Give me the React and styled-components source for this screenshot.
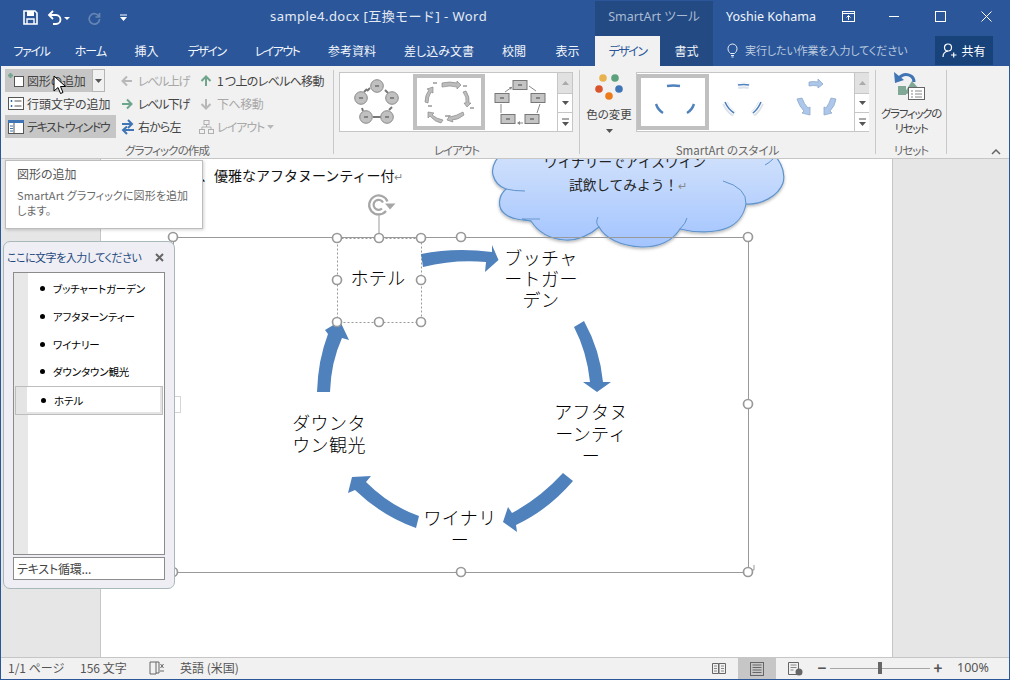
import React from "react";
import styled, { createGlobalStyle } from "styled-components";

const Global = createGlobalStyle`
  html, body { margin: 0; padding: 0; background: #fff; }
  * { box-sizing: border-box; }
`;

const UI = `"Noto Sans", "Noto Sans CJK JP", sans-serif`;
const JP = `"Noto Sans CJK JP", sans-serif`;

const Window = styled.div`
  position: relative;
  width: 1010px;
  height: 680px;
  overflow: hidden;
  display: flex;
  flex-direction: column;
  font-family: ${UI};
  font-feature-settings: "palt";
  font-size: 12px;
  color: #444;
  &::after {
    content: "";
    position: absolute;
    inset: 0;
    border: 1px solid #2b579a;
    pointer-events: none;
    z-index: 9;
  }
`;

/* ---------- title bar ---------- */
const TitleBar = styled.div`
  height: 36px;
  flex: none;
  display: flex;
  align-items: stretch;
  background: #2b579a;
  color: #fff;
`;
const Qat = styled.div`
  width: 595px;
  flex: none;
  display: grid;
  grid-template-columns: 18px 22px 30px 28px 30px 1fr;
  align-items: center;
  height: 34px;
`;
const QatIcon = styled.svg`
  display: block;
  justify-self: center;
  grid-column: ${(p) => p.$col};
  margin-left: ${(p) => p.$ml}px;
`;
const TitleText = styled.div`
  text-align: left;
  margin: -3px 0 0 142px;
  font-size: 13px;
  letter-spacing: 0.45px;
  font-feature-settings: normal;
  color: #e6ebf3;
  white-space: nowrap;
`;
const ContextTitle = styled.div`
  width: 118px;
  flex: none;
  margin-top: 1px;
  background: #234a82;
  color: #a9bad4;
  font-size: 12.5px;
  display: flex;
  align-items: center;
  justify-content: center;
  padding-bottom: 6px;
`;
const UserName = styled.div`
  width: 119px;
  flex: none;
  padding: 0 0 3px 13px;
  display: flex;
  align-items: center;
  font-size: 12.5px;
  color: #f2f5f9;
  white-space: nowrap;
`;
const WinButtons = styled.div`
  flex: 1;
  display: flex;
  align-items: center;
  padding-bottom: 3px;
`;
const WinButton = styled.span`
  width: ${(p) => p.$w}px;
  flex: none;
  display: flex;
  justify-content: center;
`;

/* ---------- tabs ---------- */
const TabRow = styled.div`
  height: 30px;
  flex: none;
  display: flex;
  align-items: stretch;
  background: #2b579a;
  padding-left: 2px;
`;
const Tab = styled.div`
  width: ${(p) => p.$w}px;
  flex: none;
  display: flex;
  align-items: center;
  justify-content: center;
  padding-bottom: 2px;
  font-size: 12px;
  white-space: nowrap;
  font-family: ${JP};
  letter-spacing: ${(p) => p.$ls || 0}px;
  color: ${(p) => (p.$active ? "#2b579a" : "#f3f6fa")};
  background: ${(p) => (p.$active ? "#f1f1f1" : p.$context ? "#234a82" : "transparent")};
`;
const TellMe = styled.div`
  width: 222px;
  flex: none;
  display: flex;
  align-items: center;
  gap: 7px;
  padding: 0 0 2px 14px;
  font-family: ${JP};
  font-size: 11px;
  letter-spacing: -0.1px;
  color: #bccadf;
  white-space: nowrap;
`;
const Share = styled.div`
  width: 58px;
  height: 29px;
  flex: none;
  display: flex;
  align-items: center;
  justify-content: center;
  gap: 4px;
  background: #17427a;
  color: #fff;
  font-family: ${JP};
  font-size: 12px;
`;

/* ---------- ribbon ---------- */
const Ribbon = styled.div`
  height: 93px;
  flex: none;
  display: flex;
  background: #f1f1f1;
  border-bottom: 1px solid #c6c6c6;
  padding-left: 1px;
  position: relative;
  font-family: ${JP};
`;
const Group = styled.div`
  width: ${(p) => p.$w}px;
  flex: none;
  height: 92px;
  display: flex;
  flex-direction: column;
  position: relative;
  &::after {
    content: "";
    position: absolute;
    right: 0;
    top: 4px;
    bottom: 4px;
    width: 1px;
    background: #c9c9c9;
  }
`;
const GroupBody = styled.div`
  height: 77px;
  flex: none;
  display: flex;
  align-items: flex-start;
  padding: ${(p) => p.$pad || "3px 0 0 4px"};
`;
const GroupLabel = styled.div`
  flex: 1;
  text-align: center;
  font-size: 11.5px;
  color: #666;
  line-height: 15px;
  letter-spacing: ${(p) => p.$ls || 0}px;
  white-space: nowrap;
  padding-right: 1px;
`;
const CmdCol = styled.div`
  width: ${(p) => p.$w}px;
  flex: none;
  display: flex;
  flex-direction: column;
`;
const Cmd = styled.div`
  height: 23px;
  display: flex;
  align-items: center;
  gap: 3px;
  font-size: 12px;
  white-space: nowrap;
  letter-spacing: ${(p) => p.$ls || 0}px;
  color: ${(p) => (p.$off ? "#a8a8a8" : "#444")};
  background: ${(p) => (p.$on ? "#c6c6c6" : "transparent")};
`;
const WideCmd = styled(Cmd)`
  width: 111px;
`;
const SplitCmd = styled.div`
  height: 23px;
  display: flex;
  align-items: stretch;
`;
const SplitMain = styled(Cmd)`
  width: 87px;
  background: #c6c6c6;
`;
const SplitDrop = styled.div`
  width: 13px;
  border: 1px solid #b5b5b5;
  display: flex;
  align-items: center;
  justify-content: center;
`;
const Gallery = styled.div`
  width: ${(p) => p.$w}px;
  height: 60px;
  flex: none;
  margin-top: 3px;
  display: flex;
  background: #fff;
  border: 1px solid #c6c6c6;
`;
const Thumb = styled.div`
  width: ${(p) => p.$w}px;
  flex: none;
  border: ${(p) => (p.$on ? "4px solid #c0c0c0" : "0")};
  margin: ${(p) => (p.$on ? "1px 0" : "0")};
  overflow: hidden;
`;
const ThumbArt = styled.svg`
  display: block;
  width: 100%;
  height: 100%;
`;
const ScrollCol = styled.div`
  margin-left: auto;
  width: 15px;
  flex: none;
  display: flex;
  flex-direction: column;
  border-left: 1px solid #c6c6c6;
`;
const ScrollBtn = styled.div`
  height: ${(p) => p.$h}px;
  display: flex;
  align-items: center;
  justify-content: center;
  background: ${(p) => (p.$off ? "#e1e1e1" : "#fff")};
  border-bottom: ${(p) => (p.$last ? "0" : "1px solid #c6c6c6")};
`;
const BigButton = styled.div`
  width: ${(p) => p.$w}px;
  flex: none;
  display: flex;
  flex-direction: column;
  align-items: center;
  font-size: 11.5px;
  line-height: 15px;
  text-align: center;
  color: #444;
  white-space: nowrap;
  letter-spacing: ${(p) => p.$ls || 0}px;
`;
const BigIconSlot = styled.span`
  display: block;
  height: ${(p) => p.$h}px;
  margin-top: ${(p) => p.$mt || 0}px;
`;
const BigLine = styled.span`
  display: block;
  margin-top: ${(p) => p.$mt || 0}px;
`;
const BigCaret = styled.span`
  display: block;
  margin-top: 3px;
  line-height: 6px;
`;
const Collapse = styled.svg`
  position: absolute;
  right: 9px;
  bottom: 3px;
`;

/* ---------- workspace ---------- */
const Workspace = styled.div`
  position: relative;
  flex: 1;
  min-height: 0;
  overflow: hidden;
  background: #e6e6e6;
  padding-left: 100px;
`;
const Page = styled.div`
  width: 793px;
  height: 100%;
  background: #fff;
  border-left: 1px solid #c6c6c6;
  border-right: 1px solid #c6c6c6;
`;
const Drawing = styled.svg`
  position: absolute;
  left: 0;
  top: 0;
`;
const DocText = styled.div`
  position: absolute;
  left: 200px;
  top: 6px;
  font-family: ${JP};
  font-feature-settings: normal;
  font-size: 14px;
  line-height: 20px;
  color: #111;
  white-space: nowrap;
`;
const Mark = styled.span`
  color: #888;
  font-size: 11px;
`;
const CloudLine = styled.div`
  position: absolute;
  left: ${(p) => p.$x}px;
  top: ${(p) => p.$y}px;
  transform: translateX(-50%);
  font-family: ${JP};
  font-feature-settings: normal;
  font-size: 13.7px;
  line-height: 20px;
  color: #222;
  white-space: nowrap;
`;
const NodeLabel = styled.div`
  position: absolute;
  left: ${(p) => p.$x}px;
  top: ${(p) => p.$y}px;
  transform: translateX(-50%);
  font-family: ${JP};
  font-feature-settings: normal;
  font-weight: 300;
  font-size: 18px;
  line-height: ${(p) => p.$lh || 22}px;
  letter-spacing: 0.4px;
  color: #000;
  text-align: center;
  white-space: pre;
`;

/* ---------- tooltip ---------- */
const Tooltip = styled.div`
  position: absolute;
  left: 5px;
  top: 1px;
  width: 198px;
  height: 69px;
  background: #fff;
  border: 1px solid #bdbdbd;
  box-shadow: 1px 1px 3px rgba(0, 0, 0, 0.18);
  padding: 5px 0 0 11px;
  font-family: ${JP};
  z-index: 5;
`;
const TipTitle = styled.div`
  font-size: 12px;
  line-height: 16px;
  color: #555;
  margin-bottom: 6px;
`;
const TipBody = styled.div`
  font-size: 11px;
  line-height: 15px;
  letter-spacing: 0.1px;
  color: #6a6a6a;
  white-space: pre;
`;

/* ---------- text pane ---------- */
const Pane = styled.div`
  position: absolute;
  left: 3px;
  top: 82px;
  width: 172px;
  height: 348px;
  background: #eeeef4;
  border: 1px solid #a9b8bb;
  border-radius: 7px;
  padding: 0 9px;
  display: flex;
  flex-direction: column;
  font-family: ${JP};
  z-index: 4;
`;
const PaneHead = styled.div`
  height: 30px;
  flex: none;
  margin-left: -6px;
  display: flex;
  align-items: center;
  justify-content: space-between;
  color: #1f497d;
  font-size: 11px;
  letter-spacing: -0.5px;
  white-space: nowrap;
`;
const PaneClose = styled.svg`
  flex: none;
  margin-right: 1px;
`;
const OutlineBox = styled.div`
  height: 283px;
  flex: none;
  background: linear-gradient(to right, #e8e8e8 14px, #fff 14px);
  border: 1px solid #8c8c8c;
  padding-top: 2px;
  display: flex;
  flex-direction: column;
`;
const OutlineRow = styled.div`
  height: ${(p) => (p.$sel ? 29 : 27.7)}px;
  flex: none;
  display: flex;
  align-items: center;
  padding-left: 26px;
  gap: 8px;
  font-size: 10.5px;
  letter-spacing: -0.15px;
  color: #000;
  white-space: nowrap;
  ${(p) =>
    p.$sel
      ? `margin: 0 1px; padding-left: 25px; border: 1px solid #bdbdbd; background: linear-gradient(#e4e4e4, #e4e4e4) left/11px 100% no-repeat, linear-gradient(#e4e4e4, #e4e4e4) right/2px 100% no-repeat, linear-gradient(#e4e4e4, #e4e4e4) bottom/100% 2px no-repeat, #fff;`
      : ""}
`;
const Bullet = styled.span`
  width: 5px;
  height: 5px;
  border-radius: 50%;
  background: #000;
  flex: none;
`;
const CycleButton = styled.div`
  margin-top: 2px;
  height: 23px;
  flex: none;
  background: #fff;
  border: 1px solid #8c8c8c;
  display: flex;
  align-items: center;
  padding-left: 3px;
  font-size: 12px;
  letter-spacing: -0.2px;
  color: #444;
`;
const PaneTab = styled.div`
  position: absolute;
  left: 172px;
  top: 237px;
  width: 9px;
  height: 17px;
  background: #fff;
  border: 1px solid #d5d5d5;
  z-index: 3;
`;
const Cursor = styled.svg`
  position: absolute;
  left: 53px;
  top: 75px;
  z-index: 8;
`;

/* ---------- status bar ---------- */
const StatusBar = styled.div`
  height: 23px;
  flex: none;
  display: flex;
  align-items: stretch;
  background: #f1f1f1;
  border-top: 1px solid #c6c6c6;
  padding: 0 0 1px 8px;
  color: #555;
  font-family: ${JP};
  white-space: nowrap;
`;
const StatusText = styled.span`
  width: ${(p) => p.$w}px;
  flex: none;
  display: flex;
  align-items: center;
  padding-bottom: 2px;
  font-size: 12px;
`;
const ZoomText = styled(StatusText)`
  margin-left: 11px;
  font-family: ${UI};
  font-size: 12.5px;
`;
const StatusView = styled.span`
  width: ${(p) => p.$w}px;
  flex: none;
  display: flex;
  align-items: center;
  justify-content: center;
  background: ${(p) => (p.$on ? "#c6c6c6" : "transparent")};
`;
const Slider = styled.div`
  width: 100px;
  flex: none;
  position: relative;
  display: flex;
  align-items: center;
  &::before {
    content: "";
    width: 100%;
    height: 1px;
    background: #a6a6a6;
  }
`;
const SliderThumb = styled.span`
  position: absolute;
  left: 48px;
  top: 4px;
  width: 4px;
  height: 12px;
  background: #666;
`;
const ZoomSign = styled.span`
  width: 16px;
  flex: none;
  display: flex;
  align-items: center;
  justify-content: center;
  padding-bottom: 2px;
  color: #555;
  font-size: 15px;
  font-weight: 700;
`;

/* ---------- small drawings ---------- */
const Caret = ({ c = "#555" }) => (
  <svg width="7" height="4" viewBox="0 0 7 4"><path d="M0 0h7L3.5 4z" fill={c} /></svg>
);
const CaretUp = ({ c = "#aaa" }) => (
  <svg width="7" height="4" viewBox="0 0 7 4"><path d="M0 4h7L3.5 0z" fill={c} /></svg>
);
const MoreCaret = () => (
  <svg width="7" height="8" viewBox="0 0 7 8"><path d="M0 1h7" stroke="#555" /><path d="M0 4h7L3.5 8z" fill="#555" /></svg>
);
const IcoSvg = styled.svg`
  flex: none;
`;
const Ico = ({ w = 18, children }) => (
  <IcoSvg width={w} height="16" viewBox={`0 0 ${w} 16`}>{children}</IcoSvg>
);

const AddShapeIcon = () => (
  <Ico w={19}>
    <rect x="9.500" y="3.500" width="9" height="10" fill="#fff" stroke="#555" />
    <path d="M5.500 0v5M3 2.500h5" stroke="#6fa58c" strokeWidth="2" />
  </Ico>
);
const BulletIcon = () => (
  <Ico w={19}>
    <rect x="3.500" y="1.500" width="15" height="12" fill="#fff" stroke="#555" />
    <path d="M5.500 5h2M6.500 4v2M5.500 10h2M6.500 9v2" stroke="#2b6cb0" />
    <path d="M9.500 5h7M9.500 10h7" stroke="#555" />
  </Ico>
);
const PaneIcon = () => (
  <Ico w={19}>
    <rect x="3.500" y="1.500" width="15" height="13" fill="#fff" stroke="#555" />
    <rect x="3" y="1" width="16" height="3" fill="#3f74b5" />
    <path d="M9 4v10" stroke="#555" />
    <path d="M5 7h3M5 9.500h3M5 12h3" stroke="#3f74b5" />
  </Ico>
);
const LevelArrow = ({ dir, c }) => {
  const rot = { l: 180, r: 0, u: -90, d: 90 }[dir];
  return (
    <Ico w={15}>
      <g transform={`rotate(${rot} 7 8)`}>
        <path d="M2 8h9M7 3.5 11.5 8 7 12.5" fill="none" stroke={c} strokeWidth="2" />
      </g>
    </Ico>
  );
};
const RtlIcon = () => (
  <Ico w={15}>
    <path d="M2 5h9M8 1l4 4-4 4" fill="none" stroke="#3f74b5" strokeWidth="2" />
    <path d="M14 11H4M7 7.500 3 11l4 4" fill="none" stroke="#3f74b5" strokeWidth="2" />
  </Ico>
);
const OrgIcon = () => (
  <Ico w={15}>
    <g fill="none" stroke="#b0b0b0">
      <rect x="5" y="1.500" width="5" height="4" />
      <rect x=".5" y="10.500" width="5" height="4" />
      <rect x="9.500" y="10.500" width="5" height="4" />
      <path d="M7.500 5.500V8M3 10.500V8h9v2.500" />
    </g>
  </Ico>
);

const Minus = ({ x, y, w = 4 }) => <path d={`M${x - w / 2} ${y}h${w}`} stroke="#444" strokeWidth="1" />;

const CycleCircles = () => {
  const pts = [[377, 86], [392, 98], [387, 117], [366, 117], [361, 98]];
  return (
    <ThumbArt viewBox="340 73 73 58">
      <path d="M367 91l3-3M385 90l3 3M392 107l-3 3M381 117h-8M362 108l1 3M364 92l3-3" stroke="#777" strokeWidth="2" fill="none" />
      {pts.map(([x, y]) => (
        <g key={x + "" + y}>
          <circle cx={x} cy={y} r="6.300" fill="#c0c0c0" stroke="#8a8a8a" />
          <Minus x={x} y={y} />
        </g>
      ))}
    </ThumbArt>
  );
};
const CycleBlocks = () => {
  const a = "#bdbdbd";
  return (
    <ThumbArt viewBox="417 78 64 48">
      <g fill={a} stroke="#8a8a8a" strokeWidth="0.7">
        <path d="M442 83q8-2 15 0v-2l4 4-4 4v-2q-7-2-15 0z" />
        <path d="M463 92l3-1q4 6 3 12h2l-4 4-3-4h2q1-6-3-11z" />
        <path d="M463 112l1 3q-6 5-12 5l1 2-6-2 3-5v2q6-1 13-5z" />
        <path d="M443 120l-2 3q-6-1-11-7l-2 2 0-6 6 1-2 2q5 4 11 5z" />
        <path d="M428 103l-3-1q0-7 4-12l-2-1 6-2 0 6-2-1q-3 5-3 11z" />
      </g>
      <g stroke="#666" strokeWidth="1">
        <path d="M433 83h4M463 86h4M470 108h4M445 116h4M428 106h4" />
      </g>
    </ThumbArt>
  );
};
const CycleRects = () => {
  const pts = [[520, 85], [538, 98], [532, 119], [508, 119], [502, 98]];
  return (
    <ThumbArt viewBox="485 73 72 58">
      <path d="M505 92l7-5M529 86l7 5M540 104l-3 9M523 123h-5M501 113v-9" stroke="#888" fill="none" />
      <path d="M517 123l3-2v4zM512 87l-3 0 2 3z" fill="#888" />
      {pts.map(([x, y]) => (
        <g key={x}>
          <rect x={x - 7} y={y - 4.500} width="14" height="9" fill="#c4c4c4" stroke="#777" />
          <Minus x={x} y={y} />
        </g>
      ))}
    </ThumbArt>
  );
};
const StyleSel = () => (
  <ThumbArt viewBox="642 78 64 48">
    <g fill="none" stroke="#4f81bd" strokeWidth="2.400">
      <path d="M668 86q6-1 13 0" />
      <path d="M657 104q2 6 7 9" />
      <path d="M688 113q5-3 7-9" />
    </g>
  </ThumbArt>
);
const StyleWhite = () => (
  <ThumbArt viewBox="711 73 73 58">
    <g fill="none">
      <g stroke="#dde2ea" strokeWidth="6">
        <path d="M740 86q6-1 11 0" />
        <path d="M727 103q3 7 9 11" />
        <path d="M763 103q-3 7-8 11" />
      </g>
      <g stroke="#fff" strokeWidth="3.500">
        <path d="M740 85q6-1 11 0" />
        <path d="M727 102q3 7 9 11" />
        <path d="M763 102q-3 7-8 11" />
      </g>
      <g stroke="#4f81bd" strokeWidth="1.600">
        <path d="M740 85q6-1 11 0" />
        <path d="M727 102q3 7 9 11" />
        <path d="M763 102q-3 7-8 11" />
      </g>
    </g>
  </ThumbArt>
);
const StyleBlue = () => (
  <ThumbArt viewBox="784 73 72 58">
    <g fill="#adc7ea" stroke="#8ea8cc" strokeWidth="0.800">
      <path d="M811 82q4-1 9 0v-3l5 5-5 4v-2q-5-1-9 0z" />
      <path d="M799 99l5-1q2 6 6 10l2-1 0 8-8-2 2-2q-5-5-7-12z" />
      <path d="M838 99l-5-1q-2 6-5 10l-2-1 0 8 8-2-2-2q5-5 6-12z" />
    </g>
  </ThumbArt>
);
const ColorDots = () => (
  <svg width="28" height="28" viewBox="0 0 28 28">
    <circle cx="8" cy="6" r="3.800" fill="#e8b24f" />
    <circle cx="20" cy="6" r="3.800" fill="#5da17c" />
    <circle cx="4" cy="17" r="3.800" fill="#d9542c" />
    <circle cx="24" cy="17" r="3.800" fill="#3f74b5" />
    <circle cx="14" cy="24" r="3.800" fill="#ec7c1a" />
  </svg>
);
const ResetIcon = () => (
  <svg width="36" height="36" viewBox="0 0 36 36">
    <path d="M10 26 19 12l8 9z" fill="#7fa896" />
    <rect x="5" y="17" width="8" height="9" fill="#7fa896" />
    <rect x="15.500" y="18.500" width="16" height="12" fill="#fff" stroke="#666" />
    <path d="M18 22h2M22 22h7M18 25h2M22 25h7M18 28h2M22 28h7" stroke="#888" />
    <path d="M5 10q6-7 13-3 3 2 3 6" fill="none" stroke="#3f74b5" strokeWidth="3" />
    <path d="M1 3l1 11 9-3z" fill="#3f74b5" />
  </svg>
);

const handles = [
  [337, 238], [379, 238], [421, 238], [337, 280], [421, 280], [337, 322], [379, 322], [421, 322],
  [173, 237], [461, 237], [748, 237], [748, 404], [748, 572], [461, 572], [173, 572],
];

const CloudShape = () => (
  <g>
    <path
      d="M505 150 C496 158 491 167 493 175 C495 183 500 187 506 189 C498 196 497 208 505 214 C511 219 521 220 531 221
         C538 232 550 239 565 240 C577 241 590 235 599 227 C605 238 620 246 642 247 C660 247 673 240 680 229
         C695 233 715 233 727 228 C737 224 744 215 746 204 C760 205 778 197 783 183 C786 172 780 160 770 150 Z"
      fill="url(#cloudFill)"
      stroke="#5f93cb"
      strokeWidth="1.200"
      filter="url(#cloudShadow)"
    />
    <g fill="none" stroke="#5f93cb" strokeWidth="1">
      <path d="M506 189q8 2 19 2" />
      <path d="M531 221q-5-1-9-2l18 0" opacity="0.9" />
      <path d="M599 227q-4-4-1-10" />
      <path d="M680 229q6-6 7-11" />
      <path d="M746 204q1-16-23-23" />
      <path d="M765 165q4-2 8-6" />
    </g>
  </g>
);

const tabs = [
  ["ファイル", 59, -1.4], ["ホーム", 59, -1], ["挿入", 53, 0], ["デザイン", 67, -1.5], ["レイアウト", 74, -1.6],
  ["参考資料", 76, 0], ["差し込み文書", 98, 0], ["校閲", 52, 0], ["表示", 55, 0],
];
const outline = ["ブッチャートガーデン", "アフタヌーンティー", "ワイナリー", "ダウンタウン観光"];

export default function App() {
  return (
    <Window>
      <Global />
      <TitleBar>
        <Qat>
          <span />
          <QatIcon $col={2} $ml={3} width="15" height="15" viewBox="0 0 15 15">
            <path d="M1 1h11l2 2v11H1z" fill="none" stroke="#fff" strokeWidth="1.600" />
            <path d="M4 1h7v5H4z" fill="#fff" />
            <path d="M4 14V9h7v5" fill="none" stroke="#fff" strokeWidth="1.400" />
          </QatIcon>
          <QatIcon $col={3} $ml={8} width="26" height="15" viewBox="0 0 26 15">
            <path d="M3 5h7a4 4 0 0 1 0 9H7" fill="none" stroke="#fff" strokeWidth="1.800" />
            <path d="M7 1 3 5l4 4" fill="none" stroke="#fff" strokeWidth="1.800" />
            <path d="M18 7h6l-3 3z" fill="#fff" />
          </QatIcon>
          <QatIcon $col={4} $ml={20} width="15" height="15" viewBox="0 0 15 15">
            <path d="M12.500 3v4h-4M12 6.500A5.200 5.200 0 1 0 12.600 9" fill="none" stroke="#6585b3" strokeWidth="1.700" />
          </QatIcon>
          <QatIcon $col={5} $ml={20} width="7" height="7" viewBox="0 0 7 7">
            <path d="M0 1h7" stroke="#fff" /><path d="M0 3h7L3.500 7z" fill="#fff" />
          </QatIcon>
          <TitleText>sample4.docx [互換モード] - Word</TitleText>
        </Qat>
        <ContextTitle>SmartArt ツール</ContextTitle>
        <UserName>Yoshie Kohama</UserName>
        <WinButtons>
          <WinButton $w={32}>
            <svg width="13" height="11" viewBox="0 0 13 11">
              <rect x=".5" y=".5" width="12" height="10" fill="none" stroke="#fff" />
              <path d="M0 2.500h13" stroke="#fff" /><path d="M6.500 9V4.500M4.500 6.500l2-2 2 2" fill="none" stroke="#fff" />
            </svg>
          </WinButton>
          <WinButton $w={60}><svg width="11" height="11" viewBox="0 0 11 11"><path d="M0 5.500h10" stroke="#fff" /></svg></WinButton>
          <WinButton $w={32}><svg width="11" height="11" viewBox="0 0 11 11"><rect x=".5" y=".5" width="10" height="10" fill="none" stroke="#fff" /></svg></WinButton>
          <WinButton $w={60}><svg width="11" height="11" viewBox="0 0 11 11"><path d="M.5.500l10 10M10.500.500l-10 10" stroke="#fff" /></svg></WinButton>
        </WinButtons>
      </TitleBar>

      <TabRow>
        {tabs.map(([t, w, ls]) => (
          <Tab key={t + w} $w={w} $ls={ls}>{t}</Tab>
        ))}
        <Tab $w={65} $active $ls={-1.5}>デザイン</Tab>
        <Tab $w={53} $context>書式</Tab>
        <TellMe>
          <svg width="11" height="15" viewBox="0 0 11 15">
            <path d="M3.500 10.500C2 9 1 8 1 5.500a4.500 4.500 0 0 1 9 0C10 8 9 9 7.500 10.500z" fill="none" stroke="#e9eef5" />
            <path d="M4 12.500h3M4.500 14h2" stroke="#e9eef5" />
          </svg>
          実行したい作業を入力してください
        </TellMe>
        <Share>
          <svg width="15" height="15" viewBox="0 0 15 15">
            <circle cx="6" cy="4.500" r="3.500" fill="none" stroke="#fff" strokeWidth="1.200" />
            <path d="M1 14q0-5 5-6M9 12h5.500M11.700 9.500v5" fill="none" stroke="#fff" strokeWidth="1.200" />
          </svg>
          共有
        </Share>
      </TabRow>

      <Ribbon>
        <Group $w={333}>
          <GroupBody>
            <CmdCol $w={115}>
              <SplitCmd>
                <SplitMain $ls={-0.2}><AddShapeIcon />図形の追加</SplitMain>
                <SplitDrop><Caret /></SplitDrop>
              </SplitCmd>
              <Cmd><BulletIcon />行頭文字の追加</Cmd>
              <WideCmd $on $ls={-1.3}><PaneIcon />テキスト ウィンドウ</WideCmd>
            </CmdCol>
            <CmdCol $w={79}>
              <Cmd $off $ls={-1.4}><LevelArrow dir="l" c="#b8b8b8" />レベル上げ</Cmd>
              <Cmd $ls={-1.4}><LevelArrow dir="r" c="#6fa58c" />レベル下げ</Cmd>
              <Cmd $ls={-0.8}><RtlIcon />右から左</Cmd>
            </CmdCol>
            <CmdCol $w={130}>
              <Cmd $ls={-0.7}><LevelArrow dir="u" c="#6fa58c" />1 つ上のレベルへ移動</Cmd>
              <Cmd $off $ls={-0.5}><LevelArrow dir="d" c="#b8b8b8" />下へ移動</Cmd>
              <Cmd $off $ls={-1}><OrgIcon />レイアウト <Caret c="#b8b8b8" /></Cmd>
            </CmdCol>
          </GroupBody>
          <GroupLabel $ls={-0.9}>グラフィックの作成</GroupLabel>
        </Group>
        <Group $w={246}>
          <GroupBody $pad="3px 0 0 5px">
            <Gallery $w={234}>
              <Thumb $w={73}><CycleCircles /></Thumb>
              <Thumb $w={72} $on><CycleBlocks /></Thumb>
              <Thumb $w={72}><CycleRects /></Thumb>
              <ScrollCol>
                <ScrollBtn $h={21} $off><CaretUp /></ScrollBtn>
                <ScrollBtn $h={19}><Caret /></ScrollBtn>
                <ScrollBtn $h={18} $last><MoreCaret /></ScrollBtn>
              </ScrollCol>
            </Gallery>
          </GroupBody>
          <GroupLabel $ls={-1}>レイアウト</GroupLabel>
        </Group>
        <Group $w={296}>
          <GroupBody $pad="3px 0 0 2px">
            <BigButton $w={54}>
              <BigIconSlot $h={29} $mt={3}><ColorDots /></BigIconSlot>
              <BigLine $mt={6}>色の変更</BigLine>
              <BigCaret><Caret /></BigCaret>
            </BigButton>
            <Gallery $w={233}>
              <Thumb $w={72} $on><StyleSel /></Thumb>
              <Thumb $w={73}><StyleWhite /></Thumb>
              <Thumb $w={72}><StyleBlue /></Thumb>
              <ScrollCol>
                <ScrollBtn $h={21} $off><CaretUp /></ScrollBtn>
                <ScrollBtn $h={19}><Caret /></ScrollBtn>
                <ScrollBtn $h={18} $last><MoreCaret /></ScrollBtn>
              </ScrollCol>
            </Gallery>
          </GroupBody>
          <GroupLabel>SmartArt のスタイル</GroupLabel>
        </Group>
        <Group $w={71}>
          <GroupBody $pad="3px 0 0 0">
            <BigButton $w={70} $ls={-1.3}>
              <BigIconSlot $h={35}><ResetIcon /></BigIconSlot>
              <BigLine $mt={2}>グラフィックの</BigLine>
              <BigLine>リセット</BigLine>
            </BigButton>
          </GroupBody>
          <GroupLabel $ls={-1}>リセット</GroupLabel>
        </Group>
        <Collapse width="10" height="6" viewBox="0 0 10 6">
          <path d="M1 5l4-4 4 4" fill="none" stroke="#666" strokeWidth="1.500" />
        </Collapse>
      </Ribbon>

      <Workspace>
        <Page />
        <DocText>、優雅なアフタヌーンティー付<Mark>↵</Mark></DocText>
        <Drawing width="1010" height="498" viewBox="0 159 1010 498">
          <defs>
            <linearGradient id="cloudFill" x1="0" y1="0" x2="0" y2="1">
              <stop offset="0" stopColor="#d2e2fb" />
              <stop offset="1" stopColor="#a3c4ff" />
            </linearGradient>
            <filter id="cloudShadow" x="-5%" y="-5%" width="110%" height="115%">
              <feDropShadow dx="0" dy="1.500" stdDeviation="1.500" floodColor="#000" floodOpacity="0.3" />
            </filter>
          </defs>
          <CloudShape />
          <rect x="173.500" y="237.500" width="575" height="335" fill="none" stroke="#999" />
          <rect x="337.500" y="238.500" width="84" height="84" fill="none" stroke="#999" strokeDasharray="2 2" />
          <path d="M379 214v24" stroke="#999" />
          <path d="M754 565v5h-3" fill="none" stroke="#999" />
          <g fill="none" stroke="#a6a6a6" strokeWidth="2.200">
            <path d="M387.500 201.500A9.500 9.500 0 1 0 386 211" />
            <path d="M383 202.500A5 5 0 1 0 382 208.500" />
          </g>
          <path d="M385 203.500h10.500l-5.500 6z" fill="#a6a6a6" />
          <g fill="#4f81bd">
            <path d="M421 254Q455 247 492 252L492 245 498.500 260 485 272 486 262Q455 259 423 267Z" />
            <path d="M574 327 584 321Q600 350 603 382L611 382 597 392 583 382 590 382Q587 352 574 327Z" />
            <path d="M563 473 573 481Q548 510 516 525L517 532 503 522 508 507 512 513Q540 498 563 473Z" />
            <path d="M419 516 416 528Q382 516 355 490L348 493 352 477 371 476 366 482Q390 506 419 516Z" />
            <path d="M317 392Q318 360 328 334L325 330 340 321 349 340 342 338Q331 362 330 392Z" />
          </g>
          {handles.map(([x, y]) => (
            <circle key={x + "-" + y} cx={x} cy={y} r="4.500" fill="#fff" stroke="#999" strokeWidth="1.700" />
          ))}
        </Drawing>
        <CloudLine $x={625} $y={-8}>ワイナリーでアイスワイン</CloudLine>
        <CloudLine $x={628} $y={15}>試飲してみよう！<Mark>↵</Mark></CloudLine>
        <NodeLabel $x={378} $y={107}>ホテル</NodeLabel>
        <NodeLabel $x={541} $y={88} $lh={21}>{"ブッチャ\nートガー\nデン"}</NodeLabel>
        <NodeLabel $x={591} $y={241}>{"アフタヌ\nーンティ\nー"}</NodeLabel>
        <NodeLabel $x={460} $y={347}>{"ワイナリ\nー"}</NodeLabel>
        <NodeLabel $x={329} $y={252}>{"ダウンタ\nウン観光"}</NodeLabel>
        <Tooltip>
          <TipTitle>図形の追加</TipTitle>
          <TipBody>{"SmartArt グラフィックに図形を追加\nします。"}</TipBody>
        </Tooltip>
        <PaneTab />
        <Pane>
          <PaneHead>
            ここに文字を入力してください
            <PaneClose width="9" height="9" viewBox="0 0 9 9">
              <path d="M1 1l7 7M8 1 1 8" stroke="#666" strokeWidth="2" />
            </PaneClose>
          </PaneHead>
          <OutlineBox>
            {outline.map((t) => (
              <OutlineRow key={t}><Bullet />{t}</OutlineRow>
            ))}
            <OutlineRow $sel><Bullet />ホテル</OutlineRow>
          </OutlineBox>
          <CycleButton>テキスト循環...</CycleButton>
        </Pane>
      </Workspace>

      <StatusBar>
        <StatusText $w={72}>1/1 ページ</StatusText>
        <StatusText $w={69}>156 文字</StatusText>
        <StatusText $w={31}>
          <svg width="16" height="14" viewBox="0 0 16 14">
            <path d="M1 1h6v12H1zM7 1l3 0v11H7" fill="none" stroke="#666" />
            <path d="M11.500 3l3 4M14.500 3l-3 4" stroke="#666" />
            <path d="M11 10h4" stroke="#666" />
          </svg>
        </StatusText>
        <StatusText $w={520}>英語 (米国)</StatusText>
        <StatusView $w={38}>
          <svg width="14" height="13" viewBox="0 0 14 13">
            <path d="M.5 1.500h6v10h-6zM7 1.500h6.500v10H7z" fill="none" stroke="#666" />
            <path d="M2 4h3M2 6.500h3M2 9h3M9 4h3M9 6.500h3M9 9h3" stroke="#888" />
          </svg>
        </StatusView>
        <StatusView $w={38} $on>
          <svg width="14" height="14" viewBox="0 0 14 14">
            <rect x=".5" y=".5" width="13" height="13" fill="none" stroke="#666" />
            <path d="M2.500 3h9M2.500 5.500h9M2.500 8h9M2.500 10.500h9" stroke="#666" />
          </svg>
        </StatusView>
        <StatusView $w={38}>
          <svg width="15" height="14" viewBox="0 0 15 14">
            <path d="M.5.500h10v12H.500z" fill="none" stroke="#666" />
            <path d="M2.500 3h6M2.500 5.500h6M2.500 8h3" stroke="#888" />
            <circle cx="11" cy="10" r="3.500" fill="#666" />
          </svg>
        </StatusView>
        <ZoomSign>−</ZoomSign>
        <Slider><SliderThumb /></Slider>
        <ZoomSign>+</ZoomSign>
        <ZoomText $w={40}>100%</ZoomText>
      </StatusBar>
      <Cursor width="14" height="21" viewBox="0 0 14 21">
        <path d="M1 1v15l4-3.500 2.500 6 2.500-1-2.500-6H12.500z" fill="#fff" stroke="#000" />
      </Cursor>
    </Window>
  );
}
